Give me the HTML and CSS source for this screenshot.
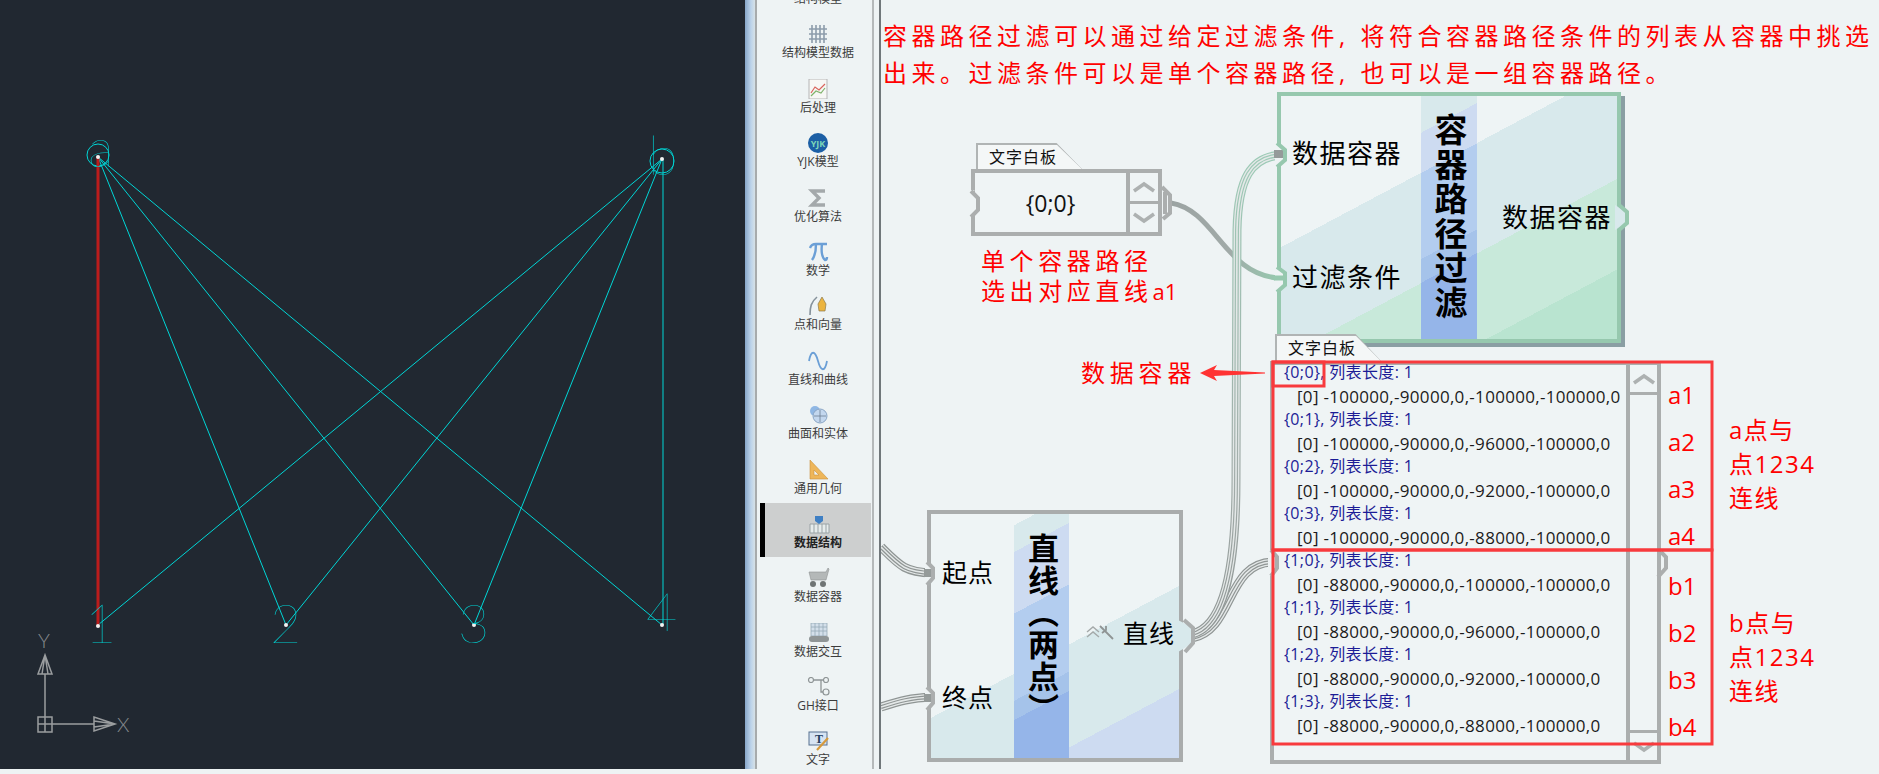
FILE: index.html
```html
<!DOCTYPE html>
<html lang="zh-CN">

<head>
    <meta charset="UTF-8">
    <title>容器路径过滤</title>
    <link rel="stylesheet" href="styles.css">
</head>

<body>
    <div class="app">
        <!-- CAD view -->
        <svg class="cad" viewBox="0 0 745 769">
            <g class="cad-lines">
                <line x1="98" y1="157" x2="286" y2="625" />
                <line x1="98" y1="157" x2="474" y2="625" />
                <line x1="98" y1="157" x2="662" y2="625" />
                <line x1="662" y1="159" x2="98" y2="625" />
                <line x1="662" y1="159" x2="286" y2="625" />
                <line x1="662" y1="159" x2="474" y2="625" />
                <line x1="663" y1="159" x2="663" y2="625" />
                <circle cx="98" cy="155" r="11" />
                <circle cx="662" cy="161" r="12" />
            </g>
            <line class="cad-red" x1="98" y1="157" x2="98" y2="627" />
            <g class="cad-dots">
                <circle cx="98" cy="157" r="2" />
                <circle cx="662" cy="159" r="2" />
                <circle cx="98" cy="626" r="2" />
                <circle cx="286" cy="625" r="2" />
                <circle cx="474" cy="625" r="2" />
                <circle cx="662" cy="625" r="2" />
            </g>
            <g class="cad-text">
                <text x="88" y="167">a</text>
                <text x="648" y="175">b</text>
                <text x="85" y="643">1</text>
                <text x="270" y="643">2</text>
                <text x="458" y="643">3</text>
                <text x="646" y="631">4</text>
            </g>
            <g class="ucs">
                <path d="M45 717V674M52 724H94M38 717H52V732H38ZM45 717V732M38 724H52" />
                <path d="M45 655L38 674H52ZM45 655L42 674M45 655L48 674" />
                <path d="M115 724L94 717V731ZM115 724L94 721M115 724L94 727" />
                <text x="38" y="648">Y</text>
                <text x="117" y="732">X</text>
            </g>
        </svg>

        <div class="gutter"></div>

        <!-- component tabs -->
        <ul class="tabs">
            <li class="tab-item"><span class="tab-icon"></span><span class="tab-name">结构模型</span></li>
            <li class="tab-item">
                <svg class="tab-icon" viewBox="0 0 28 20"><path class="i-grid" d="M8 1V19M12 1V19M16 1V19M20 1V19M5 5H23M5 10H23M5 15H23" /></svg>
                <span class="tab-name">结构模型数据</span>
            </li>
            <li class="tab-item">
                <svg class="tab-icon" viewBox="0 0 28 20"><rect class="i-paper" x="5" y="0" width="18" height="20" /><path class="i-red" d="M7 14L11 8L15 11L21 5" /><path class="i-green" d="M7 17L12 12L17 14L21 9" /></svg>
                <span class="tab-name">后处理</span>
            </li>
            <li class="tab-item">
                <svg class="tab-icon" viewBox="0 0 28 20"><circle class="i-globe" cx="14" cy="10" r="10" /><text class="i-yjk" x="14" y="13.5">YJK</text></svg>
                <span class="tab-name">YJK模型</span>
            </li>
            <li class="tab-item">
                <svg class="tab-icon" viewBox="0 0 28 20"><path class="i-sigma" d="M21 3H8L15 10L8 17H21" /></svg>
                <span class="tab-name">优化算法</span>
            </li>
            <li class="tab-item">
                <svg class="tab-icon" viewBox="0 0 28 20"><path class="i-pi" d="M6 6C7 3 9 2 12 2H23M12 2C12 9 11 14 8 18M18 2C17 9 18 16 21 18C22 18 23 17 23 15" /></svg>
                <span class="tab-name">数学</span>
            </li>
            <li class="tab-item">
                <svg class="tab-icon" viewBox="0 0 28 20"><path class="i-line" d="M6 19C6 11 7 6 13 1" /><path class="i-nib" d="M18 1L22 8L21 15H15L14 8Z" /></svg>
                <span class="tab-name">点和向量</span>
            </li>
            <li class="tab-item">
                <svg class="tab-icon" viewBox="0 0 28 20"><path class="i-wave" d="M5 10C7 -1 11 -1 14 10C17 21 21 21 23 10" /></svg>
                <span class="tab-name">直线和曲线</span>
            </li>
            <li class="tab-item">
                <svg class="tab-icon" viewBox="0 0 28 20"><circle class="i-ball" cx="11" cy="6" r="5" /><circle class="i-ball2" cx="16" cy="11" r="7" /><path class="i-cross" d="M16 5V17M10 11H22" /></svg>
                <span class="tab-name">曲面和实体</span>
            </li>
            <li class="tab-item">
                <svg class="tab-icon" viewBox="0 0 28 20"><path class="i-square" fill-rule="evenodd" d="M6 0L24 19H6ZM10 10V15H15Z" /></svg>
                <span class="tab-name">通用几何</span>
            </li>
            <li class="tab-item tab-current">
                <svg class="tab-icon" viewBox="0 0 28 20"><path class="i-fence" d="M6 10H25V19H6ZM10 10V19M14 10V19M18 10V19M22 10V19" /><path class="i-marker" d="M11 2H19V7L15 10L11 7Z" /></svg>
                <span class="tab-name">数据结构</span>
            </li>
            <li class="tab-item">
                <svg class="tab-icon" viewBox="0 0 28 20"><path class="i-cart" d="M5 4H22L24 0L25 1L22 12H7Z" /><circle class="i-wheel" cx="9" cy="16" r="3" /><circle class="i-wheel" cx="19" cy="16" r="3" /></svg>
                <span class="tab-name">数据容器</span>
            </li>
            <li class="tab-item">
                <svg class="tab-icon" viewBox="0 0 28 20"><path class="i-tower" d="M7 0H23V13H7ZM11 0V13M15 0V13M19 0V13M7 4H23M7 8H23" /><rect class="i-base" x="5" y="13" width="20" height="6" rx="3" /></svg>
                <span class="tab-name">数据交互</span>
            </li>
            <li class="tab-item">
                <svg class="tab-icon" viewBox="0 0 28 20"><path class="i-branch" d="M8 3H17V15H21M17 3H21" /><circle class="i-node" cx="7" cy="3" r="2.5" /><circle class="i-node" cx="22" cy="3" r="2.5" /><circle class="i-node" cx="22" cy="15" r="3" /></svg>
                <span class="tab-name">GH接口</span>
            </li>
            <li class="tab-item">
                <svg class="tab-icon" viewBox="0 0 28 20"><rect class="i-board" x="5" y="1" width="18" height="13" /><text class="i-t" x="11" y="12">T</text><path class="i-pencil" d="M24 7L13 19" /></svg>
                <span class="tab-name">文字</span>
            </li>
        </ul>

        <div class="gutter-thin"></div>

        <!-- definition canvas -->
        <main class="canvas">
            <p class="intro">容器路径过滤可以通过给定过滤条件, 将符合容器路径条件的列表从容器中挑选<br>出来。过滤条件可以是单个容器路径, 也可以是一组容器路径。</p>

            <svg class="wires" viewBox="881 0 998 769">
                <defs>
                    <linearGradient id="wireUp" gradientUnits="userSpaceOnUse" x1="0" y1="640" x2="0" y2="150">
                        <stop offset="0" stop-color="#8f9594" />
                        <stop offset="0.35" stop-color="#a3aeab" />
                        <stop offset="1" stop-color="#9ccbb6" />
                    </linearGradient>
                    <linearGradient id="wireSingle" gradientUnits="userSpaceOnUse" x1="1170" y1="0" x2="1277" y2="0">
                        <stop offset="0" stop-color="#9ba3a2" />
                        <stop offset="0.55" stop-color="#a1aaa8" />
                        <stop offset="1" stop-color="#96c8ae" />
                    </linearGradient>
                    <path id="w1" d="M881 547C900 566 905 572 932 573" />
                    <path id="w2" d="M881 707C900 701 910 698 932 697" />
                    <path id="w3" d="M1192 634C1226 626 1236 560 1236 480L1237 230C1238 180 1250 155 1284 155" />
                    <path id="w4" d="M1192 638C1235 630 1225 560 1276 562" />
                </defs>
                <path class="wire-one" d="M1171 203C1215 210 1225 275 1279 278" />
                <g class="wire-band">
                    <use href="#w1" class="s8" /><use href="#w1" class="s5" /><use href="#w1" class="s3" /><use href="#w1" class="s1" />
                    <use href="#w2" class="s8" /><use href="#w2" class="s5" /><use href="#w2" class="s3" /><use href="#w2" class="s1" />
                    <use href="#w4" class="s8" /><use href="#w4" class="s5" /><use href="#w4" class="s3" /><use href="#w4" class="s1" />
                </g>
                <g class="wire-band wire-up">
                    <use href="#w3" class="s8" /><use href="#w3" class="s5" /><use href="#w3" class="s3" /><use href="#w3" class="s1" />
                </g>
            </svg>

            <!-- text panel {0;0} -->
            <section class="panel path-panel">
                <div class="panel-tab">文字白板</div>
                <div class="panel-body">
                    <div class="path-value">{0;0}</div>
                    <div class="stepper">
                        <div class="step">
                            <svg class="chev" viewBox="0 0 24 12"><path d="M2 10L12 3L22 10" /></svg>
                        </div>
                        <div class="step">
                            <svg class="chev" viewBox="0 0 24 12"><path d="M2 2L12 9L22 2" /></svg>
                        </div>
                    </div>
                </div>
            </section>

            <!-- component: path filter -->
            <section class="comp comp-filter">
                <div class="comp-in">
                    <span>数据容器</span>
                    <span>过滤条件</span>
                </div>
                <div class="comp-title">容器路径过滤</div>
                <div class="comp-out">数据容器</div>
            </section>

            <!-- component: line through two points -->
            <section class="comp comp-line">
                <div class="comp-in">
                    <span>起点</span>
                    <span>终点</span>
                </div>
                <div class="comp-title">直线（两点）</div>
                <div class="comp-out">
                    <svg class="flag" viewBox="0 0 28 16">
                        <path class="flag-chev" d="M1 8L7 3L13 8M1 13L7 8L13 13" />
                        <path class="flag-tool" d="M14 2L27 15M20 2V6L16 9" />
                    </svg>
                    直线
                </div>
            </section>

            <!-- text panel with the tree -->
            <section class="panel tree-panel">
                <div class="panel-tab">文字白板</div>
                <div class="panel-body">
                    <div class="rows">
                        <div class="row-head">{0;0}, 列表长度: 1</div>
                        <div class="row-data">[0] -100000,-90000,0,-100000,-100000,0</div>
                        <div class="row-head">{0;1}, 列表长度: 1</div>
                        <div class="row-data">[0] -100000,-90000,0,-96000,-100000,0</div>
                        <div class="row-head">{0;2}, 列表长度: 1</div>
                        <div class="row-data">[0] -100000,-90000,0,-92000,-100000,0</div>
                        <div class="row-head">{0;3}, 列表长度: 1</div>
                        <div class="row-data">[0] -100000,-90000,0,-88000,-100000,0</div>
                        <div class="row-head">{1;0}, 列表长度: 1</div>
                        <div class="row-data">[0] -88000,-90000,0,-100000,-100000,0</div>
                        <div class="row-head">{1;1}, 列表长度: 1</div>
                        <div class="row-data">[0] -88000,-90000,0,-96000,-100000,0</div>
                        <div class="row-head">{1;2}, 列表长度: 1</div>
                        <div class="row-data">[0] -88000,-90000,0,-92000,-100000,0</div>
                        <div class="row-head">{1;3}, 列表长度: 1</div>
                        <div class="row-data">[0] -88000,-90000,0,-88000,-100000,0</div>
                    </div>
                    <div class="scroller">
                        <div class="scroll-btn">
                            <svg class="chev" viewBox="0 0 24 12"><path d="M2 10L12 3L22 10" /></svg>
                        </div>
                        <div class="scroll-track"></div>
                        <div class="scroll-btn scroll-btn-down">
                            <svg class="chev" viewBox="0 0 24 12"><path d="M2 2L12 9L22 2" /></svg>
                        </div>
                    </div>
                </div>
            </section>

            <!-- red notes -->
            <p class="note note-single">单个容器路径<br>选出对应直线<span class="note-latin">a1</span></p>
            <p class="note note-data">数据容器</p>
            <div class="note tags tags-a">
                <span>a1</span><span>a2</span><span>a3</span><span>a4</span>
            </div>
            <div class="note tags tags-b">
                <span>b1</span><span>b2</span><span>b3</span><span>b4</span>
            </div>
            <p class="note side side-a">a点与<br>点1234<br>连线</p>
            <p class="note side side-b">b点与<br>点1234<br>连线</p>

            <!-- grips and red frames on top of the nodes -->
            <svg class="overlay" viewBox="881 0 998 769">
                <g class="grip-cut">
                    <path d="M969 190H975L971 192L978 198V210L971 217H969Z" />
                    <path d="M1268 550H1274L1270 550L1277 557V568L1270 576H1268Z" />
                    <path d="M1275 143L1285 150V160L1275 167Z" />
                    <path d="M1275 267L1285 273V285L1275 292Z" />
                    <path d="M925 562L933 568V578L925 585Z" />
                    <path d="M925 687L933 693V703L925 710Z" />
                </g>
                <g class="grip-stub">
                    <path class="stub-band" d="M1274 154H1284" />
                    <path class="stub-green" d="M1274 278H1284" />
                    <path class="stub-band" d="M924 573H932" />
                    <path class="stub-band" d="M924 698H932" />
                </g>
                <g class="grip-bump">
                    <path d="M1178 620L1193 628V643L1178 652Z" />
                    <path d="M1615 205L1627 212V223L1615 230Z" />
                </g>
                <g class="grip grip-grey">
                    <path d="M971 191L978 198V210L971 217" />
                    <path d="M1162 187L1170 195V213L1163 219" />
                    <path d="M1165 192L1165 214" />
                    <path d="M927 562L933 568V578L927 585" />
                    <path d="M927 687L933 693V703L927 710" />
                    <path d="M1184 620L1193 628V643L1185 652" />
                    <path d="M1271 550L1277 557V568L1271 576" />
                    <path d="M1661 552L1666 557V568L1658 577" />
                </g>
                <g class="grip grip-green">
                    <path d="M1277 143L1285 150V160L1277 167" />
                    <path d="M1277 267L1285 273V285L1277 292" />
                    <path d="M1619 205L1627 212V223L1619 230" />
                </g>
                <g class="frames">
                    <rect x="1273" y="362" width="439" height="188" />
                    <rect x="1273" y="550" width="439" height="194" />
                    <rect x="1273" y="362" width="51" height="24" />
                </g>
                <path class="arrow" d="M1200 373L1217 365L1214 370L1265 372.5V373.5L1214 376L1217 381Z" />
            </svg>
        </main>
    </div>
    <div class="strip"></div>
</body>

</html>
```

FILE: styles.css
```css
/* page */

html,
body {
    margin: 0;
    padding: 0;
    height: 100%;
    overflow: hidden;
    background: #eef3f4;
    font-family: "Open Sans", "Noto Sans CJK SC", sans-serif;
}

.app {
    display: flex;
    height: 769px;
}

.strip {
    height: 5px;
}

/* CAD view */

.cad {
    display: block;
    flex: none;
    width: 745px;
    height: 769px;
    background: #212831;
}

.cad-lines {
    fill: none;
    stroke: #00d6d6;
    stroke-width: 1;
}

.cad-red {
    stroke: #bb1c1c;
    stroke-width: 3;
}

.cad-dots {
    fill: #f2f2f2;
}

.cad-text {
    fill: #00d2d3;
    font-family: "Lato", sans-serif;
    font-weight: 100;
    font-size: 54px;
}

.ucs {
    fill: none;
    stroke: #9a9d9f;
    stroke-width: 1.5;
}

.ucs text {
    fill: #85898c;
    stroke: none;
    font-family: "Lato", sans-serif;
    font-weight: 300;
    font-size: 20px;
}

/* strips left and right of the tabs */

.gutter {
    flex: none;
    width: 10px;
    border-right: 2px solid #a7abac;
    background: linear-gradient(90deg, #87a6c9, #bcd3ea 60%, #d6e1e6);
}

.gutter-thin {
    flex: none;
    width: 5px;
    border-left: 2px solid #b5b9ba;
    border-right: 2px solid #70777a;
}

/* component tabs */

.tabs {
    flex: none;
    width: 115px;
    height: 769px;
    margin: 0;
    padding: 0;
    list-style: none;
    overflow: hidden;
}

.tab-item {
    display: flex;
    flex-direction: column;
    align-items: center;
    box-sizing: border-box;
    height: 54.4px;
    padding: 11px 0 0 7px;
}

.tab-item:first-child {
    margin-top: -41px;
}

.tab-icon {
    display: block;
    width: 28px;
    height: 20px;
    flex: none;
}

.tab-name {
    font-size: 12px;
    line-height: 18px;
    color: #3c3c3c;
    white-space: nowrap;
}

.tab-current {
    margin: 0 1px 0 3px;
    padding-left: 0;
    background: #cdcfcf;
    border-left: 5px solid #000;
}

.tab-current .tab-name {
    font-weight: 700;
    color: #222;
}

/* icons of the tabs */

.i-grid {
    fill: none;
    stroke: #8c9cab;
    stroke-width: 1.6;
}

.i-paper {
    fill: #f7f7f5;
    stroke: #b5b5b5;
}

.i-red {
    fill: none;
    stroke: #d9645c;
    stroke-width: 1.2;
}

.i-green {
    fill: none;
    stroke: #7fb36b;
    stroke-width: 1.2;
}

.i-globe {
    fill: #1c5fa5;
}

.i-yjk {
    fill: #7fd8b8;
    font-size: 9px;
    font-weight: 700;
    text-anchor: middle;
}

.i-sigma {
    fill: none;
    stroke: #a4a9ab;
    stroke-width: 3.4;
}

.i-pi {
    fill: none;
    stroke: #6b9fd6;
    stroke-width: 2.4;
}

.i-line {
    fill: none;
    stroke: #86929b;
    stroke-width: 1.6;
}

.i-nib {
    fill: #ecb43f;
    stroke: #8b7a4e;
    stroke-width: .7;
}

.i-wave {
    fill: none;
    stroke: #6b9fd6;
    stroke-width: 1.8;
}

.i-ball {
    fill: #8fb7e4;
}

.i-ball2 {
    fill: #c3d7ee;
    stroke: #8aa5c4;
}

.i-cross {
    stroke: #6d7f92;
    stroke-width: .8;
}

.i-square {
    fill: #eeb65a;
    stroke: #c9923c;
    stroke-width: .6;
}

.i-fence {
    fill: #e6ecec;
    stroke: #9aa3a6;
    stroke-width: 1;
}

.i-marker {
    fill: #3f80c4;
}

.i-cart {
    fill: #b4b8b8;
    stroke: #8e9292;
    stroke-width: .6;
}

.i-wheel {
    fill: #6f7474;
}

.i-tower {
    fill: #d3dfea;
    stroke: #98a9b8;
    stroke-width: .8;
}

.i-base {
    fill: #8f9596;
}

.i-branch {
    fill: none;
    stroke: #8f9596;
    stroke-width: 1.3;
}

.i-node {
    fill: #eef3f4;
    stroke: #8f9596;
    stroke-width: 1.2;
}

.i-board {
    fill: #d7e4f2;
    stroke: #56718f;
}

.i-t {
    fill: #24405f;
    font-family: "Liberation Serif", serif;
    font-size: 12px;
    font-weight: 700;
}

.i-pencil {
    stroke: #d69a3c;
    stroke-width: 2.2;
}

/* definition canvas: nodes sit on it at their own place */

.canvas {
    position: relative;
    flex: 1;
    min-width: 0;
    height: 769px;
    overflow: hidden;
}

.intro {
    margin: 0;
    padding: 17px 0 0 2px;
    font-size: 24px;
    line-height: 37px;
    letter-spacing: 4.5px;
    color: #f00;
    white-space: nowrap;
}

.wires,
.overlay {
    position: absolute;
    left: 0;
    top: 0;
    width: 998px;
    height: 769px;
    pointer-events: none;
}

.wire-one {
    fill: none;
    stroke: url(#wireSingle);
    stroke-width: 5;
}

.wire-band use {
    fill: none;
}

.s8 {
    stroke: #8f9594;
    stroke-width: 9;
}

.s5 {
    stroke: #e4e8e8;
    stroke-width: 6.6;
}

.s3 {
    stroke: #8f9594;
    stroke-width: 4;
}

.s1 {
    stroke: #e4e8e8;
    stroke-width: 1.6;
}

.wire-up .s8,
.wire-up .s3 {
    stroke: url(#wireUp);
}

/* text panels */

.panel {
    position: absolute;
}

.path-panel {
    left: 90px;
    top: 143px;
    width: 191px;
}

.tree-panel {
    left: 389px;
    top: 334px;
    width: 391px;
}

.panel-tab {
    position: relative;
    z-index: 0;
    box-sizing: border-box;
    width: 106px;
    height: 26px;
    margin-left: 5px;
    padding-left: 13px;
    font-size: 16px;
    line-height: 28px;
    letter-spacing: 1px;
    color: #111;
    background: #b0b4b4;
    clip-path: polygon(0 0, 76% 0, 100% 100%, 0 100%);
}

.panel-tab::before {
    content: "";
    position: absolute;
    z-index: -1;
    inset: 2px 0 0 2px;
    background: #f4f7f7;
    clip-path: polygon(0 0, 76% 0, 100% 100%, 0 100%);
}

.panel-body {
    display: flex;
    box-sizing: border-box;
    border: 4px solid #abaeae;
    background: #eff4f5;
}

.path-panel .panel-body {
    height: 67px;
}

.tree-panel .panel-tab {
    height: 27px;
}

.tree-panel .panel-body {
    height: 403px;
}

.path-value {
    flex: 1;
    display: flex;
    align-items: center;
    justify-content: center;
    font-size: 23px;
    color: #111;
}

.stepper {
    flex: none;
    display: flex;
    flex-direction: column;
    width: 28px;
    border-left: 4px solid #abaeae;
}

.step {
    flex: 1;
    display: flex;
    align-items: center;
    justify-content: center;
}

.step:first-child {
    border-bottom: 3px solid #abaeae;
}

.chev {
    display: block;
    width: 24px;
    height: 12px;
    fill: none;
    stroke: #adb1b1;
    stroke-width: 3.6;
}

/* data rows */

.rows {
    flex: 1;
    min-width: 0;
    margin-top: -4px;
    padding-left: 10px;
    line-height: 23.5px;
    white-space: nowrap;
}

.row-head {
    font-size: 16px;
    letter-spacing: .35px;
    color: #1c1c96;
}

.row-data {
    padding-left: 13px;
    font-size: 17px;
    letter-spacing: .3px;
    color: #1b1b1b;
}

.scroller {
    flex: none;
    display: flex;
    flex-direction: column;
    width: 27px;
    border-left: 4px solid #abaeae;
}

.scroll-btn {
    flex: none;
    display: flex;
    align-items: center;
    justify-content: center;
    height: 27px;
    border-bottom: 3px solid #abaeae;
}

.scroll-btn-down {
    border-bottom: 0;
    border-top: 3px solid #abaeae;
}

.scroll-track {
    flex: 1;
}

/* components */

.comp {
    position: absolute;
    display: flex;
    box-sizing: border-box;
    border-width: 4px;
    border-style: solid;
    color: #000;
}

.comp-in {
    flex: none;
    display: flex;
    flex-direction: column;
    justify-content: space-between;
    box-sizing: border-box;
    white-space: nowrap;
}

.comp-title {
    flex: none;
    box-sizing: border-box;
    writing-mode: vertical-rl;
    text-orientation: upright;
    font-weight: 700;
}

.comp-out {
    flex: 1;
    display: flex;
    align-items: center;
    justify-content: flex-end;
    white-space: nowrap;
}

.comp-filter {
    left: 396px;
    top: 92px;
    width: 344px;
    height: 251px;
    border-color: #96c8ae;
    box-shadow: 4px 4px 0 #8a9ea3;
    background: linear-gradient(152deg, #eef4f5 133.5px, #d8e9ec 133.5px, #d8e9ec 231px, #c8e9da 231px, #c8e9da 311px, #b9e4d0 311px);
}

.comp-filter .comp-in {
    width: 140px;
    padding: 40px 0 45px 11px;
    font-size: 26px;
    line-height: 34px;
    letter-spacing: 1.5px;
}

.comp-filter .comp-title {
    width: 56px;
    padding-top: 17px;
    font-size: 33px;
    line-height: 56px;
    letter-spacing: 1.5px;
    background: linear-gradient(152deg, #d8e9ec 32.5px, #cddbf1 32.5px, #cddbf1 68px, #b3cdef 68px, #b3cdef 144px, #a5c3ea 144px, #a5c3ea 165px, #95b5e9 165px);
}

.comp-filter .comp-out {
    padding: 0 5px 4px 0;
    font-size: 26px;
    letter-spacing: 1.5px;
}

.comp-line {
    left: 46px;
    top: 510px;
    width: 256px;
    height: 252px;
    border-color: #a9acac;
    background: linear-gradient(152deg, #eef4f5 180px, #d8e9ec 180px, #d8e9ec 271px, #cddbf1 271px);
}

.comp-line .comp-in {
    width: 83px;
    padding: 42px 0 45px 11px;
    font-size: 25px;
    line-height: 32px;
    letter-spacing: 1px;
}

.comp-line .comp-title {
    width: 55px;
    padding-top: 19px;
    font-size: 31px;
    line-height: 55px;
    letter-spacing: 1px;
    background: linear-gradient(152deg, #eef4f5 10px, #d8e9ec 10px, #d8e9ec 33.6px, #cddbf1 33.6px, #cddbf1 88px, #b3cdef 88px, #b3cdef 165px, #a5c3ea 165px, #a5c3ea 182px, #95b5e9 182px);
}

.comp-line .comp-out {
    gap: 9px;
    padding: 0 4px 8px 0;
    font-size: 25px;
    letter-spacing: 1px;
}

.flag {
    display: block;
    width: 28px;
    height: 16px;
    fill: none;
}

.flag-chev {
    stroke: #a4a9a9;
    stroke-width: 1.4;
}

.flag-tool {
    stroke: #8f9494;
    stroke-width: 1.8;
}

/* grips */

.grip-cut path {
    fill: #eef3f4;
}

.grip-stub path {
    fill: none;
}

.stub-band {
    stroke: #959b9a;
    stroke-width: 8;
}

.stub-green {
    stroke: #96c8ae;
    stroke-width: 5;
}

.grip-bump path {
    fill: #d8e9ec;
}

.grip path {
    fill: none;
    stroke-width: 4;
}

.grip-grey path {
    stroke: #abaeae;
}

.grip-green path {
    stroke: #96c8ae;
}

/* red notes */

.note {
    position: absolute;
    margin: 0;
    color: #f00;
    font-size: 24px;
    white-space: nowrap;
}

.note-single {
    left: 100px;
    top: 246px;
    line-height: 30px;
    letter-spacing: 4.6px;
}

.note-latin {
    letter-spacing: 0;
    font-size: 22px;
}

.note-data {
    left: 200px;
    top: 356px;
    line-height: 34px;
    letter-spacing: 4.8px;
}

.tags {
    left: 787px;
    display: flex;
    flex-direction: column;
    line-height: 47px;
}

.tags-a {
    top: 371px;
}

.tags-b {
    top: 562px;
}

.side {
    left: 848px;
    line-height: 34px;
    letter-spacing: 1.5px;
}

.side-a {
    top: 413px;
}

.side-b {
    top: 606px;
}

.frames {
    fill: none;
    stroke: #f83a3d;
    stroke-width: 3;
}

.arrow {
    fill: #f33;
}
```
